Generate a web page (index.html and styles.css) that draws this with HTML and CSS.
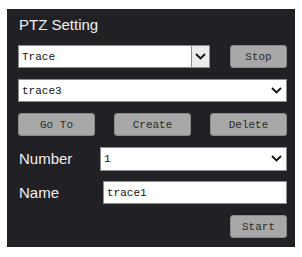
FILE: index.html
```html
<!DOCTYPE html>
<html>

<head>
    <title>PTZ Setting</title>
    <link rel="stylesheet" href="styles.css">
</head>

<body>
    <div class="panel">
        <h1 class="title">PTZ Setting</h1>

        <div class="row">
            <div class="combo">
                <div class="combo-field">Trace</div>
                <div class="combo-btn">
                    <svg width="11" height="7" viewBox="0 0 11 7"><polyline points="1,1 5.5,5.5 10,1" fill="none" stroke="#111" stroke-width="1.8"/></svg>
                </div>
            </div>
            <div class="btn">Stop</div>
        </div>

        <div class="row">
            <div class="select full">
                <span>trace3</span>
                <svg width="11" height="7" viewBox="0 0 11 7"><polyline points="1,1 5.5,5.5 10,1" fill="none" stroke="#111" stroke-width="1.8"/></svg>
            </div>
        </div>

        <div class="row">
            <div class="btn wide">Go To</div>
            <div class="btn wide">Create</div>
            <div class="btn wide">Delete</div>
        </div>

        <div class="row">
            <label class="label">Number</label>
            <div class="select number">
                <span>1</span>
                <svg width="11" height="7" viewBox="0 0 11 7"><polyline points="1,1 5.5,5.5 10,1" fill="none" stroke="#111" stroke-width="1.8"/></svg>
            </div>
        </div>

        <div class="row">
            <label class="label">Name</label>
            <div class="input name">trace1</div>
        </div>

        <div class="row end">
            <div class="btn">Start</div>
        </div>
    </div>
</body>

</html>
```

FILE: styles.css
```css
body {
    margin: 0;
    padding: 9px 0 0 7px;
    background-color: #ffffff;
}

.panel {
    width: 288px;
    height: 238px;
    box-sizing: border-box;
    padding: 7px 8px 0 11px;
    background-color: #212125;
}

.title {
    margin: 0 0 12px 1px;
    font-family: "Liberation Sans", Arial, sans-serif;
    font-size: 15px;
    font-weight: normal;
    line-height: 17px;
    color: #f2f2f2;
}

.row {
    display: flex;
    align-items: center;
    justify-content: space-between;
    height: 23px;
    margin-bottom: 11px;
}

.row.end {
    justify-content: flex-end;
    margin-top: 5px;
}

.combo {
    display: flex;
    height: 23px;
}

.combo-field,
.select,
.input {
    box-sizing: border-box;
    height: 23px;
    background-color: #ffffff;
    border: 1px solid #8c8c8c;
    font-family: "Liberation Mono", "Courier New", monospace;
    font-size: 11px;
    color: #111111;
    padding: 0 3px;
    display: flex;
    align-items: center;
}

.combo-field {
    width: 174px;
}

.combo-btn {
    box-sizing: border-box;
    width: 18px;
    height: 23px;
    background-color: #ececec;
    border: 1px solid #8c8c8c;
    border-left: none;
    display: flex;
    align-items: center;
    justify-content: center;
}

.select {
    justify-content: space-between;
    padding-right: 4px;
}

.full {
    width: 269px;
}

.number {
    width: 187px;
    height: 24px;
}

.name {
    width: 184px;
}

.label {
    font-family: "Liberation Sans", Arial, sans-serif;
    font-size: 15px;
    color: #f2f2f2;
    margin-left: 1px;
}

.btn {
    box-sizing: border-box;
    width: 57px;
    height: 23px;
    background-color: #a8a8a8;
    border: 1px solid #8a8a8a;
    border-radius: 3px;
    font-family: "Liberation Mono", "Courier New", monospace;
    font-size: 11px;
    color: #2a2a2a;
    display: flex;
    align-items: center;
    justify-content: center;
}

.btn.wide {
    width: 77px;
}
```
